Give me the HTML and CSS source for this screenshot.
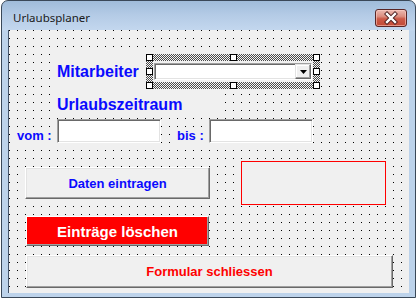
FILE: index.html
```html
<!DOCTYPE html>
<html lang="de">
<head>
<meta charset="utf-8">
<title>Urlaubsplaner</title>
<link rel="stylesheet" href="styles.css">
</head>
<body>
<div class="window">
  <div class="titlebar">
    <span class="title">Urlaubsplaner</span>
    <span class="close">
      <svg width="30" height="16" viewBox="0 0 30 16">
        <path d="M11 4 L19 12 M19 4 L11 12" stroke="#4a1c1c" stroke-width="4.2" stroke-linecap="square" fill="none"/>
        <path d="M11 4 L19 12 M19 4 L11 12" stroke="#ffffff" stroke-width="2.4" stroke-linecap="square" fill="none"/>
      </svg>
    </span>
  </div>
  <div class="frame">
    <div class="client">
      <div class="row row-emp">
        <span class="lbl lbl-big lbl-emp">Mitarbeiter</span>
        <div class="sel">
          <div class="sel-inner">
            <div class="combo">
              <span class="combo-field"></span>
              <span class="combo-btn">
                <svg width="7" height="4" viewBox="0 0 7 4"><path d="M0 0 H7 L3.5 4 Z" fill="#000"/></svg>
              </span>
            </div>
          </div>
          <span class="h h-tl"></span>
          <span class="h h-tm"></span>
          <span class="h h-tr"></span>
          <span class="h h-ml"></span>
          <span class="h h-mr"></span>
          <span class="h h-bl"></span>
          <span class="h h-bm"></span>
          <span class="h h-br"></span>
        </div>
      </div>
      <div class="row row-period">
        <span class="lbl lbl-big lbl-period">Urlaubszeitraum</span>
      </div>
      <div class="row row-dates">
        <span class="lbl lbl-small lbl-vom">vom :</span>
        <div class="textbox"></div>
        <span class="lbl lbl-small lbl-bis">bis :</span>
        <div class="textbox"></div>
      </div>
      <div class="row row-actions">
        <button class="btn btn-enter">Daten eintragen</button>
        <div class="redframe"></div>
      </div>
      <div class="row row-clear">
        <button class="btn btn-clear">Einträge löschen</button>
      </div>
      <div class="row row-close">
        <button class="btn btn-close">Formular schliessen</button>
      </div>
    </div>
  </div>
</div>
</body>
</html>
```
FILE: styles.css
```css
html, body {
  margin: 0;
  padding: 0;
}
body {
  width: 417px;
  height: 298px;
  overflow: hidden;
  background: #ffffff;
}
.window {
  margin-left: 1px;
  width: 415px;
  height: 298px;
  box-sizing: border-box;
  border: 1px solid #3a4858;
  border-radius: 7px 7px 0 0;
  background: linear-gradient(to bottom, #a0bcda 0px, #b4cbe6 14px, #c3d7ee 29px, #bdd3eb 30px, #bdd3eb 100%);
  display: flex;
  flex-direction: column;
}
.titlebar {
  height: 29px;
  flex: none;
  display: flex;
  align-items: flex-start;
  padding: 0 8px 0 11px;
}
.title {
  margin-top: 9px;
  font-family: "Noto Sans", "Open Sans", sans-serif;
  font-size: 11.5px;
  line-height: 15px;
  color: #1a1a1a;
}
.close {
  margin-left: auto;
  margin-top: 8px;
  width: 32px;
  height: 18px;
  box-sizing: border-box;
  border: 1px solid #5a2626;
  border-radius: 3px;
  background: linear-gradient(to bottom, #ecb9b0 0%, #dc8e80 40%, #cc5a48 55%, #c24a36 100%);
  box-shadow: inset 0 0 0 1px rgba(255, 210, 200, 0.55);
  display: flex;
}
.frame {
  flex: 1;
  display: flex;
  padding: 0 6px 4px 6px;
}
.client {
  flex: 1;
  border-left: 1px solid #44546a;
  background-color: #f0f0f0;
  background-image:
    linear-gradient(to right, transparent 1px, #f0f0f0 1px),
    linear-gradient(to bottom, #000000 1px, #f0f0f0 1px);
  background-size: 8px 8px, 8px 8px;
  padding-top: 24px;
  display: flex;
  flex-direction: column;
}
.row {
  display: flex;
}
.lbl {
  font-family: "Liberation Sans", Arial, sans-serif;
  font-weight: bold;
  color: #0a0aff;
  background: #f0f0f0;
  white-space: nowrap;
}
.lbl-big {
  font-size: 16px;
  line-height: 18px;
}
.lbl-small {
  font-size: 13px;
  line-height: 15px;
}
.row-emp {
  align-items: center;
  padding-left: 48px;
}
.lbl-emp {
  width: 89px;
  height: 35px;
  display: flex;
  align-items: center;
}
.sel {
  position: relative;
  padding: 7px;
  background-color: #f4f4f4;
  background-image:
    linear-gradient(45deg, #4a4a4a 25%, transparent 25%, transparent 75%, #4a4a4a 75%),
    linear-gradient(45deg, #4a4a4a 25%, transparent 25%, transparent 75%, #4a4a4a 75%);
  background-size: 2px 2px, 2px 2px;
  background-position: 0 0, 1px 1px;
}
.sel-inner {
  background: #f0f0f0;
  padding: 2px 1px;
}
.combo {
  width: 158px;
  height: 17px;
  box-sizing: border-box;
  background: #ffffff;
  border-style: solid;
  border-width: 1px;
  border-color: #a0a0a0 #ffffff #ffffff #a0a0a0;
  box-shadow: inset 1px 1px #696969, inset -1px -1px #e3e3e3;
  display: flex;
}
.combo-field {
  flex: 1;
}
.combo-btn {
  width: 16px;
  box-sizing: border-box;
  background: #f0f0f0;
  border-style: solid;
  border-width: 1px;
  border-color: #e3e3e3 #696969 #696969 #e3e3e3;
  box-shadow: inset -1px -1px #a0a0a0, inset 1px 1px #ffffff;
  display: flex;
  align-items: center;
  justify-content: center;
}
.h {
  position: absolute;
  width: 7px;
  height: 7px;
  box-sizing: border-box;
  border: 1px solid #000000;
  background: #ffffff;
}
.h-tl { left: 0; top: 0; }
.h-tm { left: 84px; top: 0; }
.h-tr { right: 0; top: 0; }
.h-ml { left: 0; top: 14px; }
.h-mr { right: 0; top: 14px; }
.h-bl { left: 0; bottom: 0; }
.h-bm { left: 84px; bottom: 0; }
.h-br { right: 0; bottom: 0; }
.row-period {
  padding-left: 48px;
}
.lbl-period {
  padding-top: 7px;
  width: 166px;
}
.row-dates {
  margin-top: 5px;
  align-items: flex-end;
}
.lbl-vom {
  margin-left: 8px;
  width: 40px;
}
.lbl-bis {
  margin-left: 16px;
  width: 32px;
}
.textbox {
  width: 104px;
  height: 24px;
  box-sizing: border-box;
  background: #ffffff;
  border-style: solid;
  border-width: 1px;
  border-color: #a0a0a0 #ffffff #ffffff #a0a0a0;
  box-shadow: inset 1px 1px #696969, inset -1px -1px #e3e3e3;
}
.row-actions {
  margin-top: 18px;
  padding-left: 16px;
  align-items: flex-start;
}
.btn {
  box-sizing: border-box;
  padding: 0;
  margin: 0;
  font-family: "Liberation Sans", Arial, sans-serif;
  font-weight: bold;
  background: #f0f0f0;
  border-style: solid;
  border-width: 1px;
  border-color: #ffffff #696969 #696969 #ffffff;
  box-shadow: inset -1px -1px #a0a0a0, inset 1px 1px #e3e3e3;
  border-radius: 0;
}
.btn-enter {
  margin-top: 6px;
  width: 185px;
  height: 32px;
  font-size: 13px;
  color: #0a0aff;
}
.redframe {
  margin-left: 31px;
  width: 145px;
  height: 44px;
  box-sizing: border-box;
  border: 1px solid #ff0000;
  background: #f0f0f0;
}
.row-clear {
  margin-top: 11px;
  padding-left: 17px;
}
.btn-clear {
  width: 183px;
  height: 30px;
  font-size: 15px;
  color: #ffffff;
  background: #ff0000;
  box-shadow: inset -1px -1px #a0a0a0;
}
.row-close {
  margin-top: 9px;
  padding-left: 17px;
}
.btn-close {
  width: 367px;
  height: 33px;
  font-size: 13px;
  color: #ff0000;
}
```
